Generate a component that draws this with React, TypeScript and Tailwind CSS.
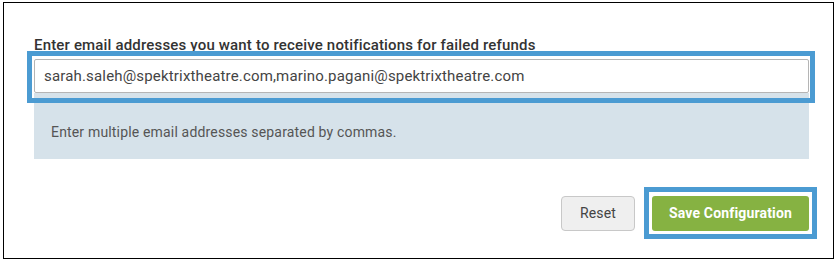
import React from "react";

const App: React.FC = () => {
  return (
    <div className="w-[840px] h-[265px] bg-white pl-[3px] pt-[2px] font-['Roboto','Liberation_Sans',sans-serif] tracking-[0.17px]">
      {/* Outer frame */}
      <div className="w-[831px] h-[257px] border border-black flex flex-col pl-[30px] pr-[24px] pt-[32px] pb-[27px]">
        <label className="text-[15px] leading-[20px] font-medium text-[#333]">
          Enter email addresses you want to receive notifications for failed refunds
        </label>

        {/* Email input with highlight */}
        <div className="relative mt-[4px]">
          <div className="h-[34px] border border-[#b5b5b5] rounded-[2px] bg-white flex items-center pl-[9px] text-[15px] text-[#444]">
            sarah.saleh@spektrixtheatre.com,marino.pagani@spektrixtheatre.com
          </div>
          <div className="absolute -left-[7px] -right-[6px] -top-[8px] -bottom-[10px] border-[5px] border-[#4b9bd2] pointer-events-none" />
        </div>

        {/* Help text */}
        <div className="bg-[#d6e2ea] pl-[17px] pt-[29px] pb-[17px] text-[14px] leading-[20px] text-[#555]">
          Enter multiple email addresses separated by commas.
        </div>

        {/* Actions */}
        <div className="flex justify-end items-start gap-[17px] mt-[37px]">
          <button className="h-[35px] w-[74px] rounded-[4px] border border-[#c8c8c8] bg-[#efefef] text-[14px] text-[#444]">
            Reset
          </button>
          <div className="relative">
            <button className="h-[35px] w-[157px] rounded-[3px] bg-[#86b242] text-[14px] font-bold text-white">
              Save Configuration
            </button>
            <div className="absolute -left-[8px] -right-[8px] -top-[9px] -bottom-[8px] border-[5px] border-[#4b9bd2] pointer-events-none" />
          </div>
        </div>
      </div>
    </div>
  );
};

export default App;
